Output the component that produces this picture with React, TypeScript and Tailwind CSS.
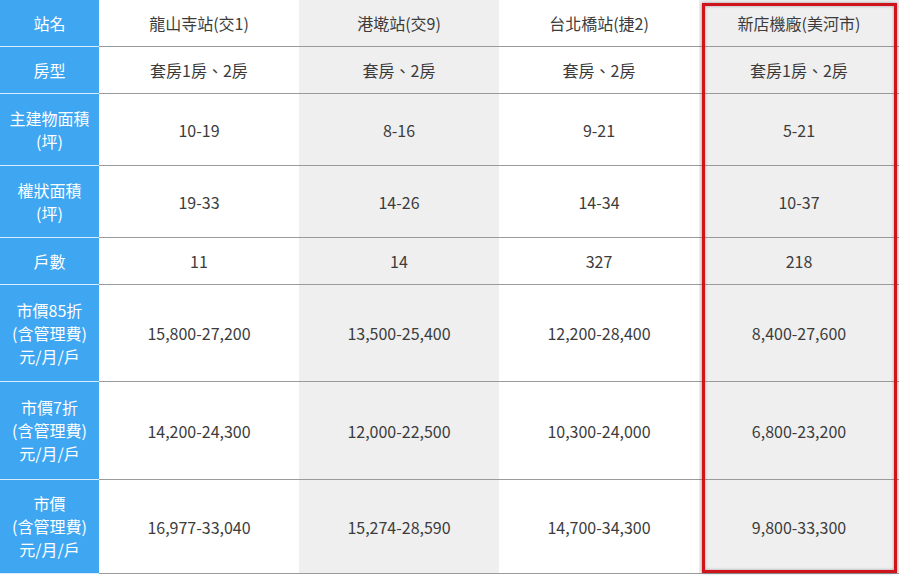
const headers = ["站名", "房型", "主建物面積\n(坪)", "權狀面積\n(坪)", "戶數", "市價85折\n(含管理費)\n元/月/戶", "市價7折\n(含管理費)\n元/月/戶", "市價\n(含管理費)\n元/月/戶"];

const rowHeights = ["h-[47px]", "h-[47px]", "h-[72px]", "h-[72px]", "h-[47px]", "h-[97px]", "h-[98px]", "h-[94px]"];

const columns = [
  ["龍山寺站(交1)", "套房1房、2房", "10-19", "19-33", "11", "15,800-27,200", "14,200-24,300", "16,977-33,040"],
  ["港墘站(交9)", "套房、2房", "8-16", "14-26", "14", "13,500-25,400", "12,000-22,500", "15,274-28,590"],
  ["台北橋站(捷2)", "套房、2房", "9-21", "14-34", "327", "12,200-28,400", "10,300-24,000", "14,700-34,300"],
  ["新店機廠(美河市)", "套房1房、2房", "5-21", "10-37", "218", "8,400-27,600", "6,800-23,200", "9,800-33,300"],
];

export default function App() {
  return (
    <div
      className="relative w-[899px] h-[575px] bg-white overflow-hidden"
      style={{ fontFamily: '"Noto Sans CJK TC", "Noto Sans", sans-serif' }}
    >
      <div className="flex">
        {/* label column */}
        <div className="w-[99px] flex flex-col">
          {headers.map((h, i) => (
            <div
              key={i}
              className={`${rowHeights[i]} bg-[#3fa6f2] border-b border-[#d9ecfb] flex items-center justify-center text-center text-white text-[16px] leading-[23px] whitespace-pre-line`}
            >
              {h}
            </div>
          ))}
        </div>
        {columns.map((col, ci) => (
          <div key={ci} className={`w-[200px] flex flex-col ${ci % 2 === 1 ? "bg-[#efefef]" : "bg-white"}`}>
            {col.map((v, ri) => (
              <div
                key={ri}
                className={`${rowHeights[ri]} border-b border-[#9a9a9a] flex items-center justify-center text-[16px] text-[#3c3c3c]`}
              >
                {v}
              </div>
            ))}
          </div>
        ))}
      </div>

      {/* highlight frame */}
      <div className="absolute left-[702px] top-[3px] w-[195px] h-[570px] border-[3px] border-[#d0141c] shadow-[inset_0_0_3px_rgba(0,0,0,0.35),0_0_3px_rgba(0,0,0,0.35)]" />
    </div>
  );
}
